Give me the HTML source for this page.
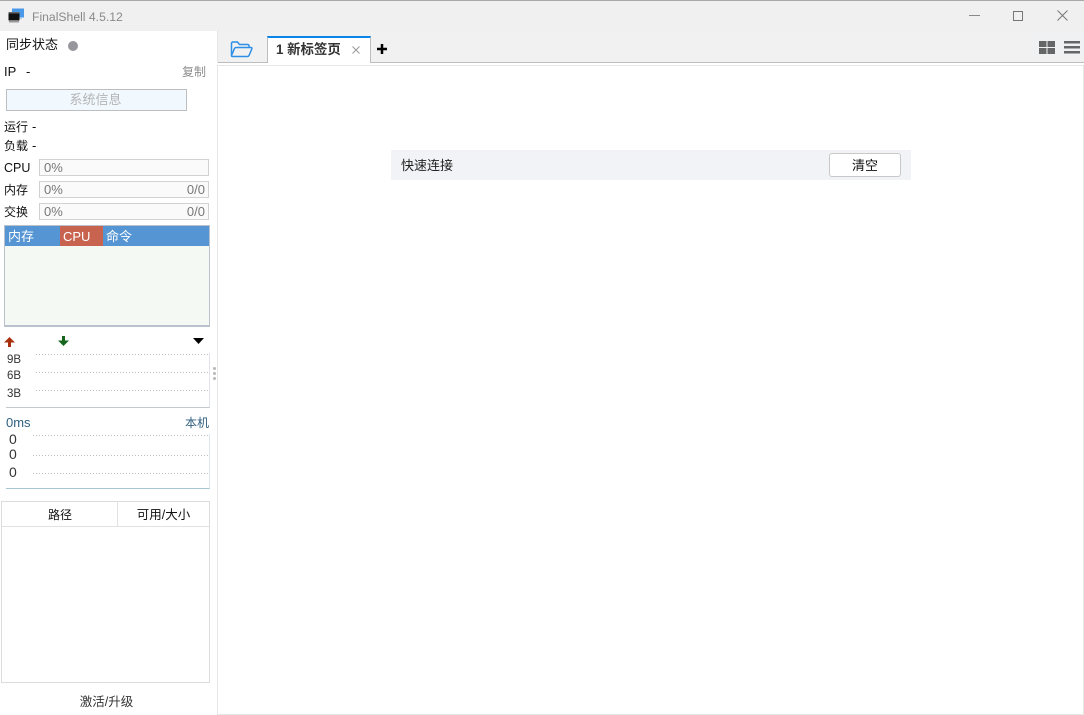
<!DOCTYPE html>
<html lang="zh"><head><meta charset="utf-8"><title>FinalShell 4.5.12</title>
<style>
html,body{margin:0;padding:0;width:1084px;height:715px;overflow:hidden;background:#fff}
body{position:relative;font-family:"Liberation Sans","Noto Sans CJK SC",sans-serif;font-size:12px;color:#111}
.a{position:absolute;box-sizing:border-box}
.t{position:absolute;white-space:nowrap;line-height:16px;height:16px}
.bar{position:absolute;left:39px;width:170px;height:17px;background:#fafafa;border:1px solid #d2d2d2;box-sizing:border-box}
.dot{position:absolute;height:1px;background:repeating-linear-gradient(90deg,#bdbdbd 0,#bdbdbd 1px,transparent 1px,transparent 3px)}
svg{position:absolute;overflow:visible}
.l{font-size:13px}
</style></head><body>
<div class="a" style="left:0;top:0;width:1084px;height:31px;background:#f0f0f0;border-top:1px solid #a9a9a9"></div>
<svg style="left:8px;top:8px" width="17" height="16" viewBox="0 0 17 16"><rect x="4" y="0.5" width="12" height="9" fill="#4a98e8"/><rect x="6" y="10" width="8" height="1" fill="#b9c9dc"/><rect x="0.5" y="4" width="11" height="8.500" fill="#111"/><rect x="0.5" y="4" width="11" height="1.500" fill="#666"/><rect x="1" y="13" width="10" height="1.500" fill="#999"/></svg>
<div class="t" style="left:32px;top:9px;color:#8a8a8a;font-size:12.200px">FinalShell 4.5.12</div>
<div class="a" style="left:969px;top:15px;width:11px;height:1px;background:#8a8a8a"></div>
<div class="a" style="left:1013px;top:11px;width:10px;height:10px;border:1px solid #777"></div>
<svg style="left:1057px;top:10px" width="11" height="11" viewBox="0 0 11 11"><path d="M.5.5l10 10M10.500.5l-10 10" stroke="#777" fill="none"/></svg>

<div class="a" style="left:217px;top:31px;width:867px;height:32px;background:#f1f1f1;border-bottom:1px solid #bdbdbd"></div>
<div class="a" style="left:217px;top:65px;width:867px;height:650px;background:#fff;border:1px solid #e6e6e6"></div>
<div class="a" style="left:217px;top:31px;width:1px;height:32px;background:#e6e6e6"></div>
<div class="a" style="left:1034px;top:33px;width:50px;height:25px;background:#f0f1f3"></div>
<svg style="left:230px;top:41px" width="23" height="17" viewBox="0 0 23 17"><path d="M1.500 14.500V2.500Q1.500 1 3 1H7.500L9.500 3.500H17.500Q19 3.500 19 5V6.500" fill="none" stroke="#2e8fe8" stroke-width="1.500"/><path d="M1.500 14.500L4.500 7.500Q5 6.500 6 6.500H21Q22.300 6.500 21.800 8L19 14.500Q18.500 15.500 17.500 15.500H2.500Q1.500 15.500 1.500 14.500Z" fill="none" stroke="#2e8fe8" stroke-width="1.500"/></svg>
<div class="a" style="left:267px;top:36px;width:104px;height:27px;background:#fff;border-left:1px solid #bdbdbd;border-right:1px solid #bdbdbd;border-top:2px solid #0a84e8"></div>
<div class="t" style="left:276px;top:42px;font-size:13.400px;font-weight:bold;color:#333">1 新标签页</div>
<svg style="left:352px;top:46px" width="8" height="8" viewBox="0 0 8 8"><path d="M.5.500l7 7M7.500.500l-7 7" stroke="#999" fill="none"/></svg>
<svg style="left:377px;top:44px" width="10" height="10" viewBox="0 0 10 10"><path d="M5 0V10M0 5H10" stroke="#000" stroke-width="2.500" fill="none"/></svg>
<svg style="left:1039px;top:41px" width="16" height="13" viewBox="0 0 16 13"><path d="M0 0h7.500v6H0zM8.500 0H16v6H8.500zM0 7h7.500v6H0zM8.500 7H16v6H8.500z" fill="#666"/></svg>
<svg style="left:1064px;top:41px" width="16" height="13" viewBox="0 0 16 13"><path d="M0 0h16v2.500H0zM0 5h16v2.500H0zM0 10h16v2.500H0z" fill="#666"/></svg>

<div class="a" style="left:391px;top:150px;width:520px;height:30px;background:#f2f3f7"></div>
<div class="t" style="left:401px;top:158px;font-size:13px;color:#222">快速连接</div>
<div class="a" style="left:829px;top:153px;width:72px;height:24px;background:#fff;border:1px solid #c8c8c8;border-radius:3px;text-align:center;font-size:13px;line-height:23px;color:#111">清空</div>

<div class="t" style="left:6px;top:37px;font-size:13px">同步状态</div>
<div class="a" style="left:68px;top:41px;width:10px;height:10px;border-radius:50%;background:#96969c"></div>
<div class="t l" style="left:4px;top:64px">IP</div><div class="t l" style="left:26px;top:64px">-</div>
<div class="t" style="left:182px;top:64px;color:#8e8e8e">复制</div>
<div class="a" style="left:6px;top:89px;width:181px;height:22px;background:#f1f9fe;border:1px solid #bdbdbd;text-align:center;line-height:20px;font-size:13px;color:#b4b4b4;padding-right:2px">系统信息</div>
<div class="t" style="left:4px;top:119px">运行</div><div class="t l" style="left:32px;top:119px">-</div>
<div class="t" style="left:4px;top:138px">负载</div><div class="t l" style="left:32px;top:138px">-</div>
<div class="t l" style="left:4px;top:160px;font-size:12.500px">CPU</div>
<div class="t" style="left:4px;top:182px">内存</div>
<div class="t" style="left:4px;top:204px">交换</div>
<div class="bar" style="top:159px"></div><div class="bar" style="top:181px"></div><div class="bar" style="top:203px"></div>
<div class="t l" style="left:44px;top:160px;color:#777">0%</div>
<div class="t l" style="left:44px;top:182px;color:#777">0%</div>
<div class="t l" style="left:44px;top:204px;color:#777">0%</div>
<div class="t l" style="right:879px;top:182px;color:#777">0/0</div>
<div class="t l" style="right:879px;top:204px;color:#777">0/0</div>

<div class="a" style="left:4px;top:225px;width:206px;height:102px;background:#f4f9f4;border:1px solid #b9c2cc;border-bottom-width:2px"></div>
<div class="a" style="left:5px;top:226px;width:204px;height:20px;background:#5595d4"></div>
<div class="a" style="left:60px;top:226px;width:43px;height:20px;background:#c7634f"></div>
<div class="t" style="left:8px;top:229px;color:#fff;font-size:13px">内存</div>
<div class="t" style="left:63px;top:229px;color:#fff;font-size:13px">CPU</div>
<div class="t" style="left:106px;top:229px;color:#fff;font-size:13px">命令</div>

<svg style="left:4px;top:337px" width="11" height="10" viewBox="0 0 11 10"><path d="M5.500 0L11 5.500H7V10H4V5.500H0Z" fill="#a8300c"/></svg>
<svg style="left:58px;top:336px" width="11" height="10" viewBox="0 0 11 10"><path d="M4 0H7V4.500H11L5.500 10L0 4.500H4Z" fill="#15661c"/></svg>
<svg style="left:193px;top:338px" width="11" height="6" viewBox="0 0 11 6"><path d="M0 0H11L5.500 6Z" fill="#000"/></svg>
<div class="a" style="left:6px;top:353px;width:204px;height:55px;border-right:1px solid #e0e4e8;border-bottom:1px solid #c2c8cc"></div>
<div class="dot" style="left:36px;width:172px;top:354px"></div>
<div class="dot" style="left:36px;width:172px;top:372px"></div>
<div class="dot" style="left:36px;width:172px;top:390px"></div>
<div class="t" style="left:7px;top:352px;color:#333;font-size:11.500px">9B</div>
<div class="t" style="left:7px;top:368px;color:#333;font-size:11.500px">6B</div>
<div class="t" style="left:7px;top:386px;color:#333;font-size:11.500px">3B</div>
<div class="a" style="left:213px;top:367px;width:3px;height:3px;background:#b8b8b8;border-radius:50%"></div>
<div class="a" style="left:213px;top:372px;width:3px;height:3px;background:#b8b8b8;border-radius:50%"></div>
<div class="a" style="left:213px;top:377px;width:3px;height:3px;background:#b8b8b8;border-radius:50%"></div>

<div class="t l" style="left:6px;top:415px;color:#2f5f80">0ms</div>
<div class="t" style="left:185px;top:415px;color:#2f5f80">本机</div>
<div class="a" style="left:6px;top:434px;width:204px;height:55px;border-right:1px solid #dde6ea;border-bottom:1px solid #a8c6d2"></div>
<div class="dot" style="left:33px;width:175px;top:435px"></div>
<div class="dot" style="left:33px;width:175px;top:455px"></div>
<div class="dot" style="left:33px;width:175px;top:473px"></div>
<div class="t" style="left:9px;top:431px;color:#333;font-size:14px">0</div>
<div class="t" style="left:9px;top:446px;color:#333;font-size:14px">0</div>
<div class="t" style="left:9px;top:464px;color:#333;font-size:14px">0</div>

<div class="a" style="left:1px;top:501px;width:209px;height:182px;border:1px solid #dcdcdc"></div>
<div class="a" style="left:2px;top:526px;width:207px;height:1px;background:#e2e2e2"></div>
<div class="a" style="left:117px;top:502px;width:1px;height:24px;background:#e2e2e2"></div>
<div class="t" style="left:2px;width:116px;text-align:center;top:507px">路径</div>
<div class="t" style="left:118px;width:91px;text-align:center;top:507px;font-size:12.500px">可用/大小</div>
<div class="t" style="left:0;width:213px;text-align:center;top:694px;color:#333;font-size:12.500px">激活/升级</div>
</body></html>
